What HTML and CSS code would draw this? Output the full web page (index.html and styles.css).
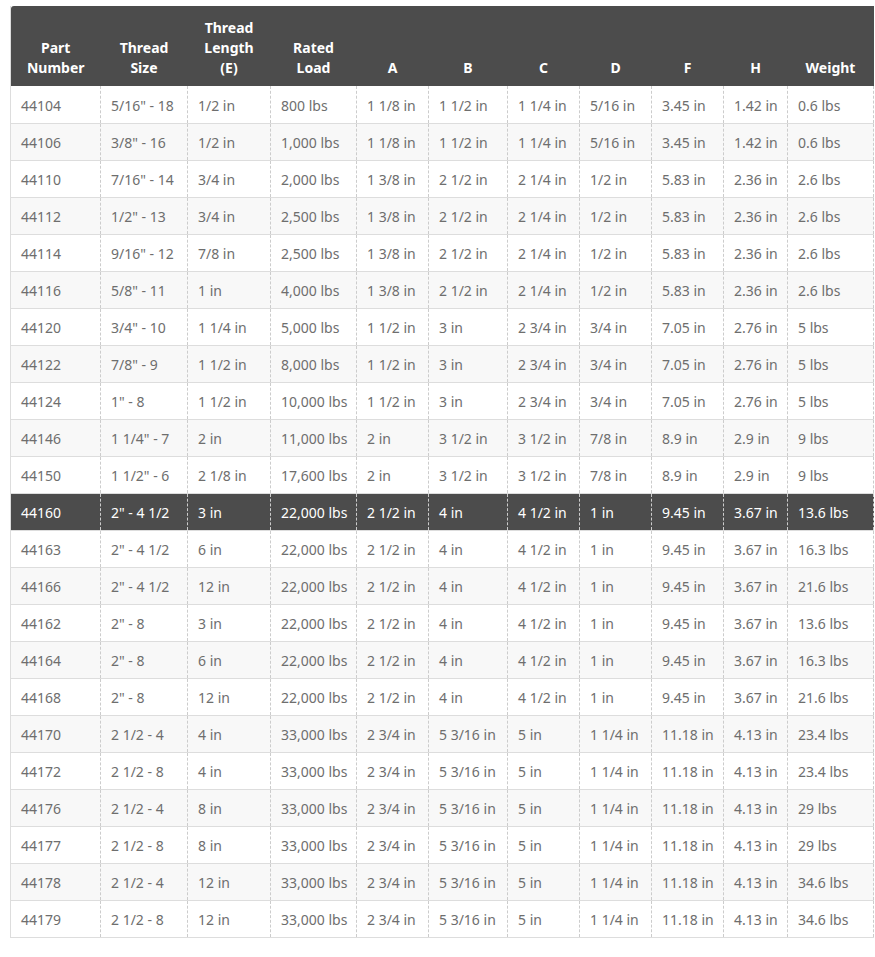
FILE: index.html
```html
<!DOCTYPE html>
<html>
<head>
<meta charset="utf-8">
<link rel="stylesheet" href="styles.css">
</head>
<body>
<table class="spec">
<colgroup>
<col class="c-part"><col class="c-size"><col class="c-len"><col class="c-load"><col class="c-a"><col class="c-b"><col class="c-c"><col class="c-d"><col class="c-f"><col class="c-h"><col class="c-w">
</colgroup>
<thead>
<tr><th>Part<br>Number</th><th>Thread<br>Size</th><th>Thread<br>Length<br>(E)</th><th>Rated<br>Load</th><th>A</th><th>B</th><th>C</th><th>D</th><th>F</th><th>H</th><th>Weight</th></tr>
</thead>
<tbody>
<tr><td>44104</td><td>5/16" - 18</td><td>1/2 in</td><td>800 lbs</td><td>1 1/8 in</td><td>1 1/2 in</td><td>1 1/4 in</td><td>5/16 in</td><td>3.45 in</td><td>1.42 in</td><td>0.6 lbs</td></tr>
<tr><td>44106</td><td>3/8" - 16</td><td>1/2 in</td><td>1,000 lbs</td><td>1 1/8 in</td><td>1 1/2 in</td><td>1 1/4 in</td><td>5/16 in</td><td>3.45 in</td><td>1.42 in</td><td>0.6 lbs</td></tr>
<tr><td>44110</td><td>7/16" - 14</td><td>3/4 in</td><td>2,000 lbs</td><td>1 3/8 in</td><td>2 1/2 in</td><td>2 1/4 in</td><td>1/2 in</td><td>5.83 in</td><td>2.36 in</td><td>2.6 lbs</td></tr>
<tr><td>44112</td><td>1/2" - 13</td><td>3/4 in</td><td>2,500 lbs</td><td>1 3/8 in</td><td>2 1/2 in</td><td>2 1/4 in</td><td>1/2 in</td><td>5.83 in</td><td>2.36 in</td><td>2.6 lbs</td></tr>
<tr><td>44114</td><td>9/16" - 12</td><td>7/8 in</td><td>2,500 lbs</td><td>1 3/8 in</td><td>2 1/2 in</td><td>2 1/4 in</td><td>1/2 in</td><td>5.83 in</td><td>2.36 in</td><td>2.6 lbs</td></tr>
<tr><td>44116</td><td>5/8" - 11</td><td>1 in</td><td>4,000 lbs</td><td>1 3/8 in</td><td>2 1/2 in</td><td>2 1/4 in</td><td>1/2 in</td><td>5.83 in</td><td>2.36 in</td><td>2.6 lbs</td></tr>
<tr><td>44120</td><td>3/4" - 10</td><td>1 1/4 in</td><td>5,000 lbs</td><td>1 1/2 in</td><td>3 in</td><td>2 3/4 in</td><td>3/4 in</td><td>7.05 in</td><td>2.76 in</td><td>5 lbs</td></tr>
<tr><td>44122</td><td>7/8" - 9</td><td>1 1/2 in</td><td>8,000 lbs</td><td>1 1/2 in</td><td>3 in</td><td>2 3/4 in</td><td>3/4 in</td><td>7.05 in</td><td>2.76 in</td><td>5 lbs</td></tr>
<tr><td>44124</td><td>1" - 8</td><td>1 1/2 in</td><td>10,000 lbs</td><td>1 1/2 in</td><td>3 in</td><td>2 3/4 in</td><td>3/4 in</td><td>7.05 in</td><td>2.76 in</td><td>5 lbs</td></tr>
<tr><td>44146</td><td>1 1/4" - 7</td><td>2 in</td><td>11,000 lbs</td><td>2 in</td><td>3 1/2 in</td><td>3 1/2 in</td><td>7/8 in</td><td>8.9 in</td><td>2.9 in</td><td>9 lbs</td></tr>
<tr><td>44150</td><td>1 1/2" - 6</td><td>2 1/8 in</td><td>17,600 lbs</td><td>2 in</td><td>3 1/2 in</td><td>3 1/2 in</td><td>7/8 in</td><td>8.9 in</td><td>2.9 in</td><td>9 lbs</td></tr>
<tr class="active"><td>44160</td><td>2" - 4 1/2</td><td>3 in</td><td>22,000 lbs</td><td>2 1/2 in</td><td>4 in</td><td>4 1/2 in</td><td>1 in</td><td>9.45 in</td><td>3.67 in</td><td>13.6 lbs</td></tr>
<tr><td>44163</td><td>2" - 4 1/2</td><td>6 in</td><td>22,000 lbs</td><td>2 1/2 in</td><td>4 in</td><td>4 1/2 in</td><td>1 in</td><td>9.45 in</td><td>3.67 in</td><td>16.3 lbs</td></tr>
<tr><td>44166</td><td>2" - 4 1/2</td><td>12 in</td><td>22,000 lbs</td><td>2 1/2 in</td><td>4 in</td><td>4 1/2 in</td><td>1 in</td><td>9.45 in</td><td>3.67 in</td><td>21.6 lbs</td></tr>
<tr><td>44162</td><td>2" - 8</td><td>3 in</td><td>22,000 lbs</td><td>2 1/2 in</td><td>4 in</td><td>4 1/2 in</td><td>1 in</td><td>9.45 in</td><td>3.67 in</td><td>13.6 lbs</td></tr>
<tr><td>44164</td><td>2" - 8</td><td>6 in</td><td>22,000 lbs</td><td>2 1/2 in</td><td>4 in</td><td>4 1/2 in</td><td>1 in</td><td>9.45 in</td><td>3.67 in</td><td>16.3 lbs</td></tr>
<tr><td>44168</td><td>2" - 8</td><td>12 in</td><td>22,000 lbs</td><td>2 1/2 in</td><td>4 in</td><td>4 1/2 in</td><td>1 in</td><td>9.45 in</td><td>3.67 in</td><td>21.6 lbs</td></tr>
<tr><td>44170</td><td>2 1/2 - 4</td><td>4 in</td><td>33,000 lbs</td><td>2 3/4 in</td><td>5 3/16 in</td><td>5 in</td><td>1 1/4 in</td><td>11.18 in</td><td>4.13 in</td><td>23.4 lbs</td></tr>
<tr><td>44172</td><td>2 1/2 - 8</td><td>4 in</td><td>33,000 lbs</td><td>2 3/4 in</td><td>5 3/16 in</td><td>5 in</td><td>1 1/4 in</td><td>11.18 in</td><td>4.13 in</td><td>23.4 lbs</td></tr>
<tr><td>44176</td><td>2 1/2 - 4</td><td>8 in</td><td>33,000 lbs</td><td>2 3/4 in</td><td>5 3/16 in</td><td>5 in</td><td>1 1/4 in</td><td>11.18 in</td><td>4.13 in</td><td>29 lbs</td></tr>
<tr><td>44177</td><td>2 1/2 - 8</td><td>8 in</td><td>33,000 lbs</td><td>2 3/4 in</td><td>5 3/16 in</td><td>5 in</td><td>1 1/4 in</td><td>11.18 in</td><td>4.13 in</td><td>29 lbs</td></tr>
<tr><td>44178</td><td>2 1/2 - 4</td><td>12 in</td><td>33,000 lbs</td><td>2 3/4 in</td><td>5 3/16 in</td><td>5 in</td><td>1 1/4 in</td><td>11.18 in</td><td>4.13 in</td><td>34.6 lbs</td></tr>
<tr><td>44179</td><td>2 1/2 - 8</td><td>12 in</td><td>33,000 lbs</td><td>2 3/4 in</td><td>5 3/16 in</td><td>5 in</td><td>1 1/4 in</td><td>11.18 in</td><td>4.13 in</td><td>34.6 lbs</td></tr>
</tbody>
</table>
</body>
</html>
```

FILE: styles.css
```css
html, body {
  margin: 0;
  padding: 0;
  background: #ffffff;
}
body {
  padding: 6px 0 0 10px;
  font-family: "Noto Sans", "Noto Sans CJK KR", sans-serif;
  font-size: 14px;
  color: #6e6e6e;
}
.spec {
  border-collapse: collapse;
  table-layout: fixed;
  width: 863px;
  border-left: 1px solid #dddddd;
}
.c-part { width: 90px; }
.c-size { width: 87px; }
.c-len { width: 83px; }
.c-load { width: 86px; }
.c-a { width: 72px; }
.c-b { width: 79px; }
.c-c { width: 72px; }
.c-d { width: 72px; }
.c-f { width: 72px; }
.c-h { width: 64px; }
.c-w { width: 86px; }
.spec thead th {
  background: #4c4c4c;
  color: #ffffff;
  font-weight: 700;
  line-height: 20px;
  height: 80px;
  padding: 0 4px 8px;
  box-sizing: border-box;
  vertical-align: bottom;
  text-align: center;
}
.spec thead th:first-child {
  border-top-left-radius: 3px;
}
.spec tbody td {
  height: 37px;
  box-sizing: border-box;
  padding: 3px 0 0 10px;
  vertical-align: middle;
  white-space: nowrap;
  border-bottom: 1px solid #dddddd;
  border-right: 1px dashed #cccccc;
  line-height: 20px;
}
.spec tbody tr:nth-child(even) td {
  background: #f8f8f8;
}
.spec tbody tr.active td {
  background: #4c4c4c;
  color: #ffffff;
}
```
